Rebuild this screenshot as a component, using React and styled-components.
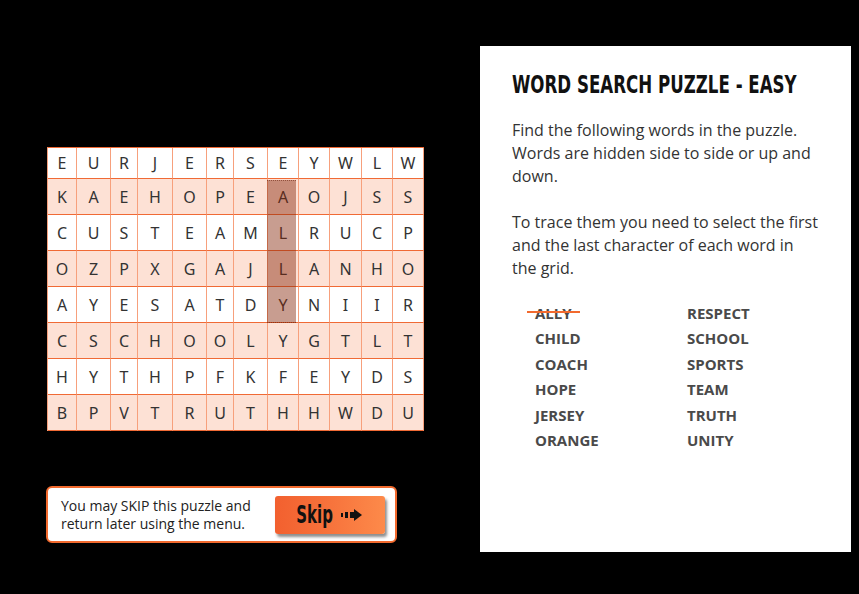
import React from 'react'
import styled, { createGlobalStyle } from 'styled-components'

const GRID = [
	'EURJERSEYWLW',
	'KAEHOPEAOJSS',
	'CUSTEAMLRUCP',
	'OZPXGAJLANHO',
	'AYESATDYNIIR',
	'CSCHOOLYGTLT',
	'HYTHPFKFEYDS',
	'BPVTRUTHHWDU',
]

const COLS = [29, 34, 27, 35, 34, 27, 34, 31, 31, 32, 31, 31]

const WORDS = [
	['ALLY', true],
	['RESPECT'],
	['CHILD'],
	['SCHOOL'],
	['COACH'],
	['SPORTS'],
	['HOPE'],
	['TEAM'],
	['JERSEY'],
	['TRUTH'],
	['ORANGE'],
	['UNITY'],
]

const Global = createGlobalStyle`
	html, body {
		margin: 0;
		padding: 0;
		background: #000;
		overflow: hidden;
	}
	* {
		box-sizing: border-box;
	}
`

const Page = styled.div`
	display: flex;
	width: 859px;
	height: 594px;
	padding: 46px 8px 0 46px;
	background: #000;
`

const LeftCol = styled.div`
	display: flex;
	flex-direction: column;
	padding-top: 101px;
	width: 380px;
`

const Board = styled.div`
	position: relative;
	display: grid;
	grid-template-columns: ${COLS.map((w) => w + 'px').join(' ')};
	grid-template-rows: 31px repeat(7, 36px);
	width: 377px;
	margin-left: 1px;
	border-top: 1px solid #f06a35;
	border-left: 1px solid #f7a07c;
`

const Cell = styled.div`
	display: flex;
	align-items: center;
	justify-content: center;
	background: ${(p) => (p.$shade ? '#fde1d5' : '#fff')};
	border-right: 1px solid #f7a07c;
	border-bottom: 1px solid #f06a35;
	font-family: 'Noto Sans', sans-serif;
	font-size: 16px;
	color: #333;
`

const Found = styled.div`
	position: absolute;
	left: 219px;
	top: 32px;
	width: 29px;
	height: 143px;
	background: rgba(133, 37, 8, 0.45);
	border-top: 1px dotted rgba(110, 40, 20, 0.6);
	border-bottom: 1px dotted rgba(110, 40, 20, 0.6);
`

const SkipBox = styled.div`
	display: flex;
	align-items: center;
	justify-content: space-between;
	margin-top: 55px;
	width: 351px;
	height: 57px;
	padding: 0 10px 0 13px;
	background: #fff;
	border: 2px solid #f26a2e;
	border-radius: 6px;
`

const SkipText = styled.p`
	margin: 0;
	font-family: 'Open Sans', sans-serif;
	font-size: 14px;
	line-height: 18px;
	color: #222;
`

const SkipButton = styled.button`
	display: flex;
	align-items: center;
	justify-content: center;
	gap: 7px;
	width: 110px;
	height: 38px;
	padding: 0 2px 0 0;
	border: none;
	border-radius: 3px;
	background: linear-gradient(90deg, #f2602f 0%, #f7733c 50%, #fd8a4a 100%);
	box-shadow: 2px 3px 3px rgba(0, 0, 0, 0.45);
	cursor: pointer;
`

const SkipLabel = styled.span`
	display: flex;
	justify-content: center;
	width: 38px;

	span {
		display: inline-block;
		flex: none;
		transform: scaleX(0.6);
		font-family: 'DejaVu Sans', sans-serif;
		font-weight: 700;
		font-size: 25px;
		line-height: 30px;
		color: #111;
	}
`

const Panel = styled.div`
	margin-left: auto;
	width: 371px;
	height: 506px;
	padding: 24px 30px 0 32px;
	background: #fff;
`

const Title = styled.h1`
	margin: 0 -20px 19px 0;
	overflow: hidden;
	white-space: nowrap;
	font-family: 'DejaVu Sans', sans-serif;
	font-weight: 700;
	font-size: 25px;
	line-height: 30px;
	color: #111;

	span {
		display: inline-block;
		transform: scaleX(0.666);
		transform-origin: left center;
	}
`

const Para = styled.p`
	margin: 0 0 23px;
	font-family: 'Open Sans', sans-serif;
	font-size: 16px;
	line-height: 23px;
	color: #333;
`

const WordList = styled.ul`
	display: grid;
	grid-template-columns: 152px 120px;
	grid-auto-rows: 25.4px;
	margin: 20px 0 0;
	padding: 0 0 0 23px;
	list-style: none;
`

const Word = styled.li`
	position: relative;
	justify-self: start;
	font-family: 'Open Sans', sans-serif;
	font-weight: 700;
	font-size: 15px;
	line-height: 20px;
	color: #4a4a4a;

	${(p) =>
		p.$done &&
		`
		&::after {
			content: '';
			position: absolute;
			left: -8px;
			right: -8px;
			top: 8px;
			height: 2px;
			background: #f26a2e;
		}
	`}
`

const Arrow = () => (
	<svg width='22' height='12' viewBox='0 0 22 12'>
		<rect x='0' y='4' width='2' height='4' fill='#111' />
		<rect x='4' y='3' width='3' height='6' fill='#111' />
		<rect x='9' y='3' width='5' height='6' fill='#111' />
		<polygon points='13,0 21,6 13,12' fill='#111' />
	</svg>
)

export default function App() {
	return (
		<Page>
			<Global />
			<LeftCol>
				<Board>
					{GRID.map((row, r) =>
						row.split('').map((ch, c) => (
							<Cell key={r + '-' + c} $shade={r % 2 === 1}>
								{ch}
							</Cell>
						))
					)}
					<Found />
				</Board>
				<SkipBox>
					<SkipText>
						You may SKIP this puzzle and
						<br />
						return later using the menu.
					</SkipText>
					<SkipButton type='button'>
						<SkipLabel>
							<span>Skip</span>
						</SkipLabel>
						<Arrow />
					</SkipButton>
				</SkipBox>
			</LeftCol>
			<Panel>
				<Title>
					<span>WORD SEARCH PUZZLE - EASY</span>
				</Title>
				<Para>
					Find the following words in the puzzle. Words are hidden side to side
					or up and down.
				</Para>
				<Para>
					To trace them you need to select the first and the last character of
					each word in the grid.
				</Para>
				<WordList>
					{WORDS.map(([w, done]) => (
						<Word key={w} $done={done}>
							{w}
						</Word>
					))}
				</WordList>
			</Panel>
		</Page>
	)
}
